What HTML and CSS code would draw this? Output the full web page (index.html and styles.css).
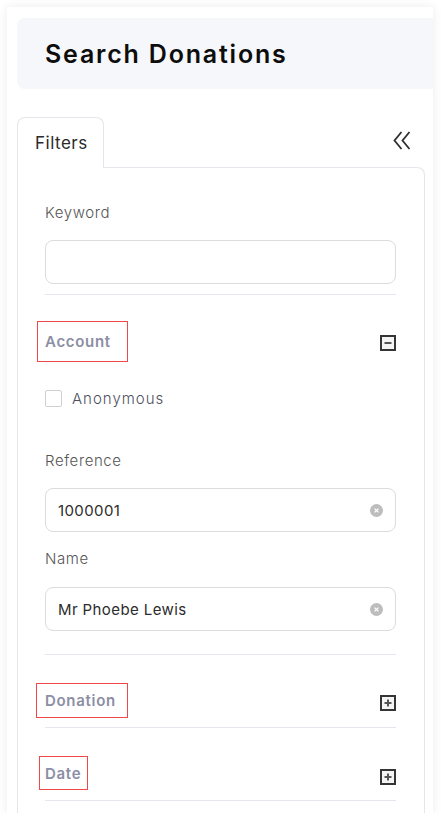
FILE: index.html
```html
<!DOCTYPE html>
<html lang="en">
<head>
<meta charset="utf-8">
<title>Search Donations</title>
<link rel="stylesheet" href="styles.css">
</head>
<body>
<div class="card">
  <div class="page-header">
    <h1 class="title">Search Donations</h1>
  </div>

  <div class="tabs">
    <div class="tab">Filters</div>
    <button class="collapse" aria-label="Collapse">
      <svg width="18" height="19" viewBox="0 0 18 19"><polyline points="8.5,1 1.5,9.5 8.5,18" fill="none" stroke="#2e2e2e" stroke-width="1.8"/><polyline points="16.5,1 9.5,9.5 16.5,18" fill="none" stroke="#2e2e2e" stroke-width="1.8"/></svg>
    </button>
  </div>

  <div class="panel">
    <div class="field first">
      <label class="label">Keyword</label>
      <div class="input"></div>
    </div>
    <div class="divider divider-keyword"></div>

    <div class="section-head section-account">
      <span class="section-title title-account">Account</span>
      <svg class="toggle" width="16" height="16" viewBox="0 0 16 16"><rect x="1" y="1" width="14" height="14" fill="#f4f4f4" stroke="#353535" stroke-width="2"/><line x1="4.5" y1="8" x2="11.5" y2="8" stroke="#555" stroke-width="2"/></svg>
    </div>

    <div class="check-row">
      <span class="checkbox"></span>
      <span class="check-label">Anonymous</span>
    </div>

    <div class="field ref">
      <label class="label">Reference</label>
      <div class="input filled">
        <span class="value">1000001</span>
        <span class="clear"><svg width="13" height="13" viewBox="0 0 13 13"><circle cx="6.5" cy="6.5" r="6.5" fill="#bdbdbd"/><path d="M4.6 4.6 L8.4 8.4 M8.4 4.6 L4.6 8.4" stroke="#fff" stroke-width="1.3"/></svg></span>
      </div>
    </div>
    <div class="field name">
      <label class="label">Name</label>
      <div class="input filled">
        <span class="value">Mr Phoebe Lewis</span>
        <span class="clear"><svg width="13" height="13" viewBox="0 0 13 13"><circle cx="6.5" cy="6.5" r="6.5" fill="#bdbdbd"/><path d="M4.6 4.6 L8.4 8.4 M8.4 4.6 L4.6 8.4" stroke="#fff" stroke-width="1.3"/></svg></span>
      </div>
    </div>
    <div class="divider divider-account"></div>

    <div class="section-head section-donation">
      <span class="section-title title-donation">Donation</span>
      <svg class="toggle" width="16" height="16" viewBox="0 0 16 16"><rect x="1" y="1" width="14" height="14" fill="#f4f4f4" stroke="#353535" stroke-width="2"/><line x1="4.5" y1="8" x2="11.5" y2="8" stroke="#555" stroke-width="2"/><line x1="8" y1="4.5" x2="8" y2="11.5" stroke="#555" stroke-width="2"/></svg>
    </div>
    <div class="divider divider-donation"></div>

    <div class="section-head section-date">
      <span class="section-title title-date">Date</span>
      <svg class="toggle" width="16" height="16" viewBox="0 0 16 16"><rect x="1" y="1" width="14" height="14" fill="#f4f4f4" stroke="#353535" stroke-width="2"/><line x1="4.5" y1="8" x2="11.5" y2="8" stroke="#555" stroke-width="2"/><line x1="8" y1="4.5" x2="8" y2="11.5" stroke="#555" stroke-width="2"/></svg>
    </div>
    <div class="divider divider-date"></div>
  </div>
</div>
</body>
</html>
```

FILE: styles.css
```css
* { box-sizing: border-box; }

html, body {
  margin: 0;
  padding: 0;
  background: #ffffff;
  font-family: Inter, "Open Sans", "Liberation Sans", sans-serif;
  color: #333;
}

.card {
  margin: 7px 8px 0 7px;
  height: 806px;
  background: #fff;
  box-shadow: 0 0 10px rgba(0, 0, 0, 0.08);
  padding: 11px 0 0 10px;
  overflow: hidden;
}

.page-header {
  height: 71px;
  background: #f6f7fa;
  border-radius: 8px 0 0 8px;
  padding-left: 28px;
  display: flex;
  align-items: center;
}

.title {
  margin: 0;
  font-size: 25px;
  font-weight: 600;
  color: #0d0d0d;
  letter-spacing: 1.8px;
}

.tabs {
  margin-top: 28px;
  width: 408px;
  display: flex;
  justify-content: space-between;
  align-items: center;
}

.tab {
  position: relative;
  width: 87px;
  height: 51px;
  margin-bottom: -1px;
  background: #fff;
  border: 1px solid #e5e5eb;
  border-bottom: none;
  border-radius: 8px 8px 0 0;
  padding-left: 17px;
  display: flex;
  align-items: center;
  font-size: 17px;
  font-weight: 400;
  color: #2a2a2a;
  letter-spacing: 0.5px;
}

.collapse {
  border: none;
  background: none;
  padding: 0;
  margin: 0 14px 4px 0;
  display: flex;
}

.panel {
  width: 408px;
  min-height: 700px;
  border: 1px solid #e5e5eb;
  border-bottom: none;
  border-top-right-radius: 8px;
  padding: 0 28px 0 27px;
}

.field { display: flex; flex-direction: column; }
.field.first { padding-top: 34px; }
.field.ref { margin-top: 41px; }
.field.name { margin-top: 16px; }
.field.name .input { margin-top: 17px; }

.label {
  font-size: 15px;
  line-height: 22px;
  font-weight: 300;
  color: #555;
  letter-spacing: 0.6px;
}

.input {
  margin-top: 16px;
  height: 44px;
  border: 1px solid #dcdce0;
  border-radius: 8px;
  display: flex;
  align-items: center;
  justify-content: space-between;
  padding: 0 12px 0 12px;
}

.value {
  font-size: 15px;
  color: #2c2c2c;
  letter-spacing: 0.4px;
}

.clear { display: flex; }

.divider {
  height: 1px;
  background: #e6e6ee;
}
.divider-keyword { margin-top: 10px; }
.divider-account { margin-top: 23px; }
.divider-donation { margin-top: 9px; }
.divider-date { margin-top: 10px; }

.section-head {
  display: flex;
  justify-content: space-between;
  align-items: flex-start;
  padding-top: 28px;
}
.section-account { padding-top: 26px; }

.section-title {
  border: 1px solid #f04848;
  font-size: 15px;
  font-weight: 600;
  color: #8b8ea4;
  letter-spacing: 0.7px;
  display: flex;
  align-items: center;
}
.title-account { height: 41px; padding: 0 16px 0 7px; margin-left: -8px; }
.title-donation { height: 35px; padding: 0 11px 0 8px; margin-left: -9px; }
.title-date { height: 34px; padding: 0 6px 0 5px; margin-left: -6px; }

.toggle { display: block; }
.section-account .toggle { margin-top: 14px; }
.section-donation .toggle { margin-top: 12px; }
.section-date .toggle { margin-top: 13px; }

.check-row {
  margin-top: 25px;
  height: 22px;
  display: flex;
  align-items: center;
  gap: 10px;
}

.checkbox {
  width: 17px;
  height: 17px;
  border: 1px solid #d0d0d4;
  border-radius: 2px;
  background: #fff;
}

.check-label {
  font-size: 15px;
  font-weight: 300;
  color: #4d5060;
  letter-spacing: 1px;
}
```
